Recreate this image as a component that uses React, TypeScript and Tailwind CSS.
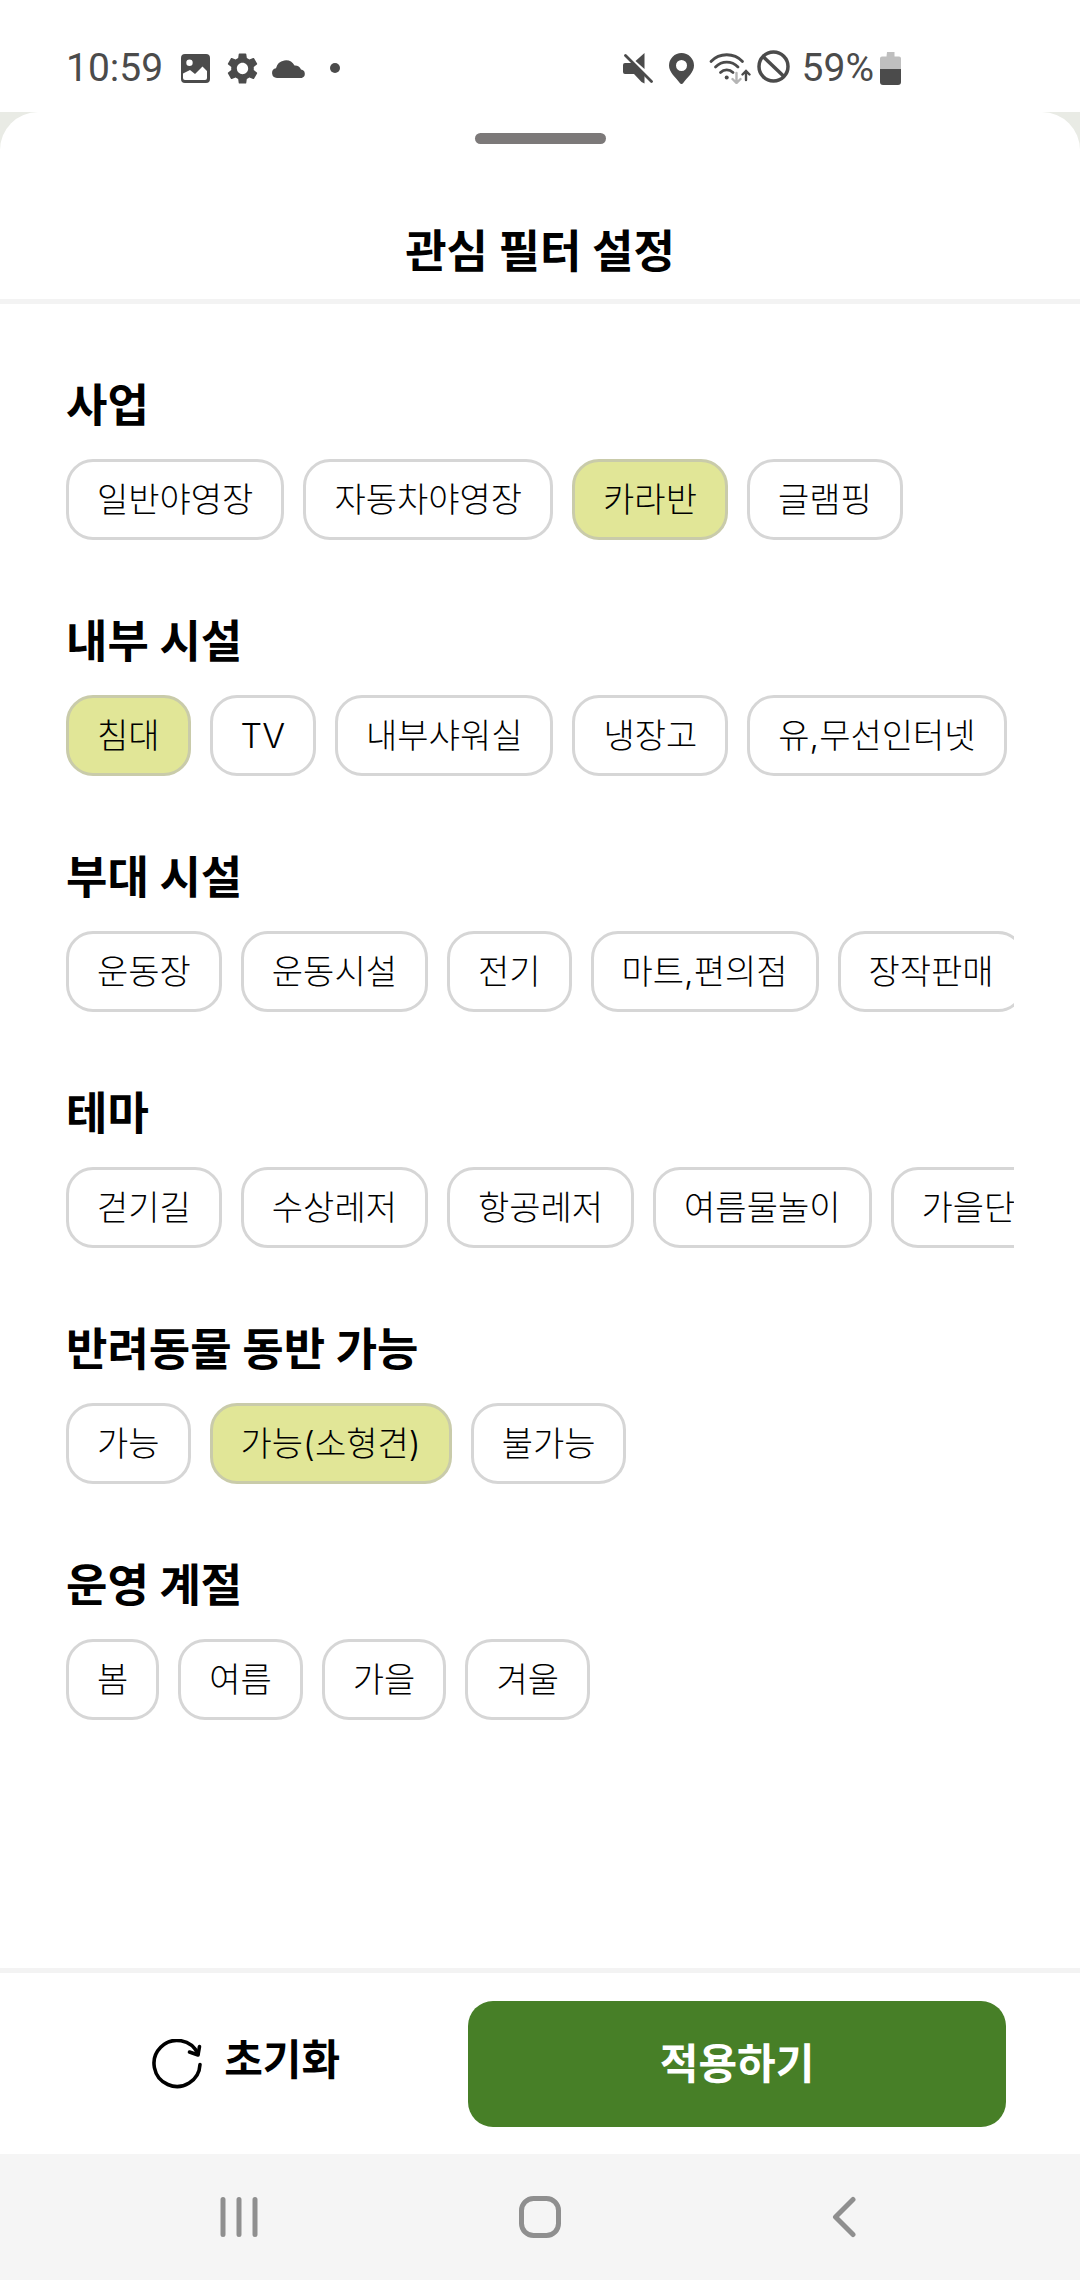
import React, { useState } from "react";

type Section = { title: string; options: string[]; initial?: string };

const SECTIONS: Section[] = [
  { title: "사업", options: ["일반야영장", "자동차야영장", "카라반", "글램핑"], initial: "카라반" },
  { title: "내부 시설", options: ["침대", "TV", "내부샤워실", "냉장고", "유,무선인터넷"], initial: "침대" },
  { title: "부대 시설", options: ["운동장", "운동시설", "전기", "마트,편의점", "장작판매"] },
  { title: "테마", options: ["걷기길", "수상레저", "항공레저", "여름물놀이", "가을단풍"] },
  { title: "반려동물 동반 가능", options: ["가능", "가능(소형견)", "불가능"], initial: "가능(소형견)" },
  { title: "운영 계절", options: ["봄", "여름", "가을", "겨울"] },
];

const INITIAL: string[] = SECTIONS.filter((s) => s.initial).map((s) => `${s.title}/${s.initial}`);

function StatusBar() {
  return (
    <header className="flex h-28 shrink-0 items-center justify-between bg-white pt-6 pr-[179px] pl-[66px] font-['Roboto',sans-serif] text-[39px] leading-none text-[#4b4b4b]">
      <div className="flex items-center">
        <span>10:59</span>
        <svg className="ml-[18px]" width="29" height="29" viewBox="0 0 29 29" aria-hidden="true">
          <path
            fill="currentColor"
            fillRule="evenodd"
            d="M4 0h21a4 4 0 0 1 4 4v21a4 4 0 0 1-4 4H4a4 4 0 0 1-4-4V4a4 4 0 0 1 4-4zM8.500 5.500a3.200 3.200 0 1 0 0 6.400a3.200 3.200 0 0 0 0-6.400zM2 19.500V24a2 2 0 0 0 2 2h20a2 2 0 0 0 2-2v-7l-4.500-4.500l-7.500 7.500l-5-4z"
          />
        </svg>
        <svg className="ml-4" width="33" height="33" viewBox="1.500 1.500 21 21" aria-hidden="true">
          <path
            fill="currentColor"
            d="M19.140 12.940c.04-.3.06-.61.06-.94 0-.32-.02-.64-.07-.94l2.030-1.580a.49.49 0 0 0 .12-.61l-1.920-3.320a.488.488 0 0 0-.59-.22l-2.390.96c-.5-.38-1.030-.7-1.620-.94L14.400 2.810a.484.484 0 0 0-.48-.41h-3.840c-.24 0-.43.17-.47.41l-.36 2.540c-.59.24-1.130.57-1.620.94l-2.390-.96c-.22-.08-.47 0-.59.22L2.740 8.870c-.12.21-.08.47.12.61l2.030 1.580c-.05.3-.09.63-.09.94s.02.64.07.94l-2.030 1.580a.49.49 0 0 0-.12.61l1.920 3.320c.12.22.37.29.59.22l2.390-.96c.5.38 1.030.7 1.620.94l.36 2.540c.05.24.24.41.48.41h3.840c.24 0 .44-.17.47-.41l.36-2.540c.59-.24 1.130-.56 1.620-.94l2.390.96c.22.08.47 0 .59-.22l1.920-3.320c.12-.22.07-.47-.12-.61l-2.010-1.580zM12 15.600A3.610 3.610 0 0 1 8.400 12c0-1.980 1.620-3.600 3.600-3.600s3.600 1.620 3.600 3.600-1.620 3.600-3.600 3.600z"
          />
        </svg>
        <svg className="ml-[13px]" width="34" height="19" viewBox="0 0 34 19" aria-hidden="true">
          <path
            fill="currentColor"
            d="M5 19a4.900 4.900 0 0 1-1-9.700A10 10 0 0 1 22.500 6.500A6.600 6.600 0 0 1 29 10.600A4.300 4.300 0 0 1 29.700 19z"
          />
        </svg>
        <span className="ml-6 size-[10px] rounded-full bg-current" />
      </div>
      <div className="flex items-center">
        <svg width="30" height="31" viewBox="0 0 30 31" aria-hidden="true">
          <path
            fill="currentColor"
            d="M2 10h7.500L21.500 22v8.500l-3-1.500L11 21H2a2 2 0 0 1-2-2v-7a2 2 0 0 1 2-2zM12.500 8L21.500 0v16z"
          />
          <path d="M2.500 2.500L28.500 28.500" stroke="currentColor" strokeWidth="2.800" strokeLinecap="round" />
        </svg>
        <svg className="ml-4" width="25" height="31" viewBox="0 0 25 31" aria-hidden="true">
          <path
            fill="currentColor"
            fillRule="evenodd"
            d="M12.500 0A12.500 12.500 0 0 1 25 12.500c0 7-6.500 11.500-11 17.700a1.800 1.800 0 0 1-3 0C6.500 24 0 19.500 0 12.500A12.500 12.500 0 0 1 12.500 0zM12.500 7a5.500 5.500 0 1 0 0 11a5.500 5.500 0 0 0 0-11z"
          />
        </svg>
        <svg className="ml-[15px]" width="42" height="31" viewBox="0 0 42 31" fill="none" aria-hidden="true">
          <g stroke="currentColor" strokeWidth="2.800" strokeLinecap="round">
            <path d="M2 8.500C10.500-.5 25-.5 33.500 8.500" />
            <path d="M6.500 14C13 7.500 22.500 7.500 29 14" />
            <path d="M11.500 19.500C15 16 20.500 16 24 19.500" />
            <path d="M37 27V18.500M33.500 21.500L37 18l3.500 3.500" strokeWidth="2.400" />
          </g>
          <circle cx="17.700" cy="24.500" r="2" fill="currentColor" />
          <path
            d="M27.500 20v9.500M23.500 26l4 4l4-4"
            stroke="#b5b5b5"
            strokeWidth="2.400"
            strokeLinecap="round"
          />
        </svg>
        <svg className="mb-1 ml-[6px]" width="33" height="33" viewBox="0 0 33 33" fill="none" aria-hidden="true">
          <circle cx="16.500" cy="16.500" r="14.500" stroke="currentColor" strokeWidth="3.500" />
          <path d="M6 6.500L27 26.500" stroke="currentColor" strokeWidth="3.500" />
        </svg>
        <span className="ml-3">59%</span>
        <svg className="ml-[6px]" width="21" height="33" viewBox="0 0 21 33" aria-hidden="true">
          <path
            fill="#bfbfbf"
            d="M7 0h7.500v4.500H19a2 2 0 0 1 2 2V18H0V6.500a2 2 0 0 1 2-2h4.500z"
          />
          <path fill="currentColor" d="M0 17h21v13a3 3 0 0 1-3 3H3a3 3 0 0 1-3-3z" />
        </svg>
      </div>
    </header>
  );
}

function Chip({ label, selected, onToggle }: { label: string; selected: boolean; onToggle: () => void }) {
  const look = selected ? "border-[#c9cbaa] bg-[#e1e697]" : "border-[#d6d6d6] bg-white";
  return (
    <button
      type="button"
      aria-pressed={selected}
      onClick={onToggle}
      className={`h-[81px] shrink-0 rounded-[27px] border-3 px-7 text-[34px] leading-none font-light whitespace-nowrap text-black ${look}`}
    >
      {label}
    </button>
  );
}

function NavBar() {
  return (
    <nav
      aria-label="시스템"
      className="grid h-[126px] shrink-0 grid-cols-3 items-center justify-items-center bg-[#f5f5f5] px-[88px] text-[#8f8f8f]"
    >
      <button type="button" aria-label="최근 앱">
        <svg width="40" height="42" viewBox="0 0 40 42" fill="none" stroke="currentColor" strokeWidth="5" strokeLinecap="round">
          <path d="M4 3.500v35M20 3.500v35M36 3.500v35" />
        </svg>
      </button>
      <button type="button" aria-label="홈">
        <svg width="42" height="42" viewBox="0 0 42 42" fill="none" stroke="currentColor" strokeWidth="5">
          <rect x="2.500" y="2.500" width="37" height="37" rx="12" />
        </svg>
      </button>
      <button type="button" aria-label="뒤로">
        <svg width="32" height="42" viewBox="0 0 32 42" fill="none" stroke="currentColor" strokeWidth="5" strokeLinecap="round" strokeLinejoin="round">
          <path d="M28 3.500L10.500 21L28 38.500" />
        </svg>
      </button>
    </nav>
  );
}

export default function App() {
  const [selected, setSelected] = useState<string[]>(INITIAL);

  const toggle = (key: string) =>
    setSelected((now) => (now.includes(key) ? now.filter((k) => k !== key) : [...now, key]));

  return (
    <div className="flex min-h-screen flex-col bg-[#e9ebe5] font-['Inter','Noto_Sans_CJK_KR',sans-serif] text-black">
      <StatusBar />
      <div className="flex flex-1 flex-col rounded-t-[38px] bg-white">
        <div className="flex flex-col items-center border-b-5 border-[#f3f3f3] pt-[21px] pb-[17px]">
          <span className="h-[11px] w-[131px] rounded-full bg-[#7c7979]" />
          <h1 className="mt-[78px] text-[45px] leading-[60px] font-bold">관심 필터 설정</h1>
        </div>

        <main className="flex flex-1 flex-col gap-[72px] px-[66px] pt-[72px]">
          {SECTIONS.map((section) => (
            <section key={section.title}>
              <h2 className="text-[45px] leading-[60px] font-bold">{section.title}</h2>
              <div className="mt-[23px] flex gap-[19px] overflow-x-auto [scrollbar-width:none]">
                {section.options.map((option) => {
                  const key = `${section.title}/${option}`;
                  return (
                    <Chip
                      key={key}
                      label={option}
                      selected={selected.includes(key)}
                      onToggle={() => toggle(key)}
                    />
                  );
                })}
              </div>
            </section>
          ))}
        </main>

        <footer className="grid grid-cols-[32fr_50fr] gap-[50px] border-t-5 border-[#f3f3f3] px-[74px] pt-7 pb-[27px] text-[42px] leading-[60px] font-bold">
          <button
            type="button"
            onClick={() => setSelected([])}
            className="flex items-center justify-center gap-[22px]"
          >
            <svg width="50" height="50" viewBox="0 0 50 50" fill="none" stroke="currentColor" strokeWidth="3.600" strokeLinecap="round" aria-hidden="true">
              <path d="M48 25.500A23 23 0 1 1 46 15" />
              <path d="M47.500 7.500L46 16L37.500 13" strokeLinejoin="round" />
            </svg>
            <span className="pb-2">초기화</span>
          </button>
          <button type="button" className="h-[126px] rounded-[25px] bg-[#477f27] text-white">
            적용하기
          </button>
        </footer>
      </div>
      <NavBar />
    </div>
  );
}
